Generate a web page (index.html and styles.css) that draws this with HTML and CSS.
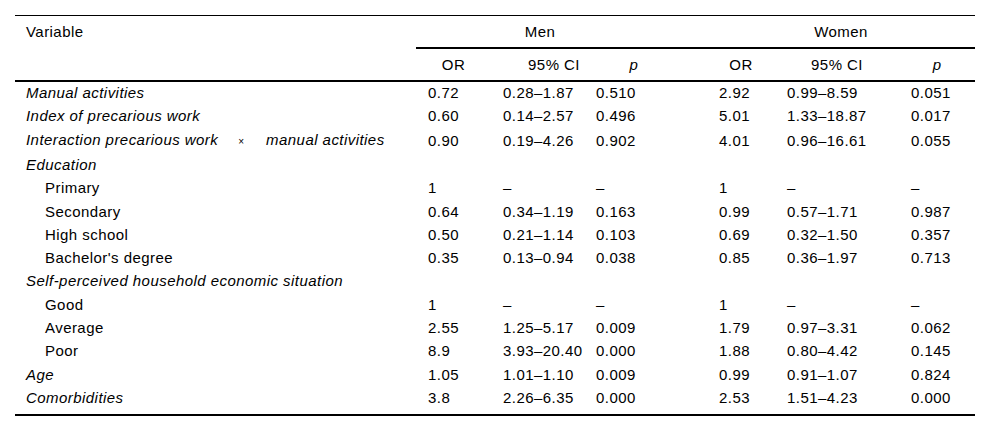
FILE: index.html
```html
<!DOCTYPE html>
<html lang="en">
<head>
<meta charset="utf-8">
<title>Odds ratios by sex</title>
<link rel="stylesheet" href="styles.css">
</head>
<body>
<div class="wrap">
<table class="or-table">
  <colgroup>
    <col class="c-var">
    <col class="c-or">
    <col class="c-ci">
    <col class="c-p">
    <col class="c-or2">
    <col class="c-ci2">
    <col class="c-p2">
  </colgroup>
  <thead>
    <tr class="h1">
      <th class="h-var" rowspan="2">Variable</th>
      <th class="h-men" colspan="3">Men</th>
      <th class="h-women" colspan="3">Women</th>
    </tr>
    <tr class="h2">
      <th class="h-or">OR</th>
      <th class="h-ci">95% CI</th>
      <th class="h-p"><i>p</i></th>
      <th class="h-or2">OR</th>
      <th class="h-ci2">95% CI</th>
      <th class="h-p2"><i>p</i></th>
    </tr>
  </thead>
  <tbody>
    <tr><td class="lab"><i>Manual activities</i></td><td>0.72</td><td>0.28–1.87</td><td>0.510</td><td>2.92</td><td>0.99–8.59</td><td>0.051</td></tr>
    <tr><td class="lab"><i>Index of precarious work</i></td><td>0.60</td><td>0.14–2.57</td><td>0.496</td><td>5.01</td><td>1.33–18.87</td><td>0.017</td></tr>
    <tr><td class="lab"><i>Interaction precarious work</i><span class="times">×</span><i>manual activities</i></td><td>0.90</td><td>0.19–4.26</td><td>0.902</td><td>4.01</td><td>0.96–16.61</td><td>0.055</td></tr>
    <tr><td class="lab"><i>Education</i></td><td></td><td></td><td></td><td></td><td></td><td></td></tr>
    <tr><td class="lab sub">Primary</td><td>1</td><td>–</td><td>–</td><td>1</td><td>–</td><td>–</td></tr>
    <tr><td class="lab sub">Secondary</td><td>0.64</td><td>0.34–1.19</td><td>0.163</td><td>0.99</td><td>0.57–1.71</td><td>0.987</td></tr>
    <tr><td class="lab sub">High school</td><td>0.50</td><td>0.21–1.14</td><td>0.103</td><td>0.69</td><td>0.32–1.50</td><td>0.357</td></tr>
    <tr><td class="lab sub">Bachelor's degree</td><td>0.35</td><td>0.13–0.94</td><td>0.038</td><td>0.85</td><td>0.36–1.97</td><td>0.713</td></tr>
    <tr><td class="lab"><i>Self-perceived household economic situation</i></td><td></td><td></td><td></td><td></td><td></td><td></td></tr>
    <tr><td class="lab sub">Good</td><td>1</td><td>–</td><td>–</td><td>1</td><td>–</td><td>–</td></tr>
    <tr><td class="lab sub">Average</td><td>2.55</td><td>1.25–5.17</td><td>0.009</td><td>1.79</td><td>0.97–3.31</td><td>0.062</td></tr>
    <tr><td class="lab sub">Poor</td><td>8.9</td><td>3.93–20.40</td><td>0.000</td><td>1.88</td><td>0.80–4.42</td><td>0.145</td></tr>
    <tr><td class="lab"><i>Age</i></td><td>1.05</td><td>1.01–1.10</td><td>0.009</td><td>0.99</td><td>0.91–1.07</td><td>0.824</td></tr>
    <tr class="last"><td class="lab"><i>Comorbidities</i></td><td>3.8</td><td>2.26–6.35</td><td>0.000</td><td>2.53</td><td>1.51–4.23</td><td>0.000</td></tr>
  </tbody>
</table>
</div>
</body>
</html>
```
FILE: styles.css
```css
html, body {
  margin: 0;
  padding: 0;
  background: #fff;
}

.wrap {
  padding: 15px 25px 0 15px;
}

.or-table {
  border-collapse: collapse;
  width: 960px;
  table-layout: fixed;
  font-family: "Liberation Sans", Arial, sans-serif;
  font-size: 15px;
  line-height: 17.3px;
  letter-spacing: 0.45px;
  color: #000;
  border-top: 1px solid #000;
}

.c-var { width: 401px; }
.c-or { width: 75px; }
.c-ci { width: 93px; }
.c-p { width: 123px; }
.c-or2 { width: 68px; }
.c-ci2 { width: 124px; }
.c-p2 { width: 76px; }

.or-table th {
  font-weight: normal;
  text-align: center;
  padding: 7px 0 6px;
}

.or-table .h1 th {
  padding: 6.5px 0 7.5px;
  border-bottom: 2px solid #000;
}

.or-table .h1 th.h-var {
  text-align: left;
  vertical-align: top;
  padding-left: 11px;
}

.or-table .h1 th.h-men {
  padding-right: 43px;
}

.or-table .h2 th {
  border-bottom: 2px solid #000;
}

.or-table .h2 th.h-ci {
  padding-left: 33px;
}

.or-table .h2 th.h-p {
  padding-right: 23px;
}

.or-table td {
  padding: 2.5px 0 3.5px 12px;
  text-align: left;
  white-space: nowrap;
}

.or-table td.lab {
  padding-left: 11px;
}

.or-table td.sub {
  padding-left: 30px;
}

.times {
  font-size: 10px;
  margin: 0 22px 0 20px;
  letter-spacing: 0;
}

.or-table tr.last td {
  padding-bottom: 8px;
  border-bottom: 2px solid #000;
}
```
